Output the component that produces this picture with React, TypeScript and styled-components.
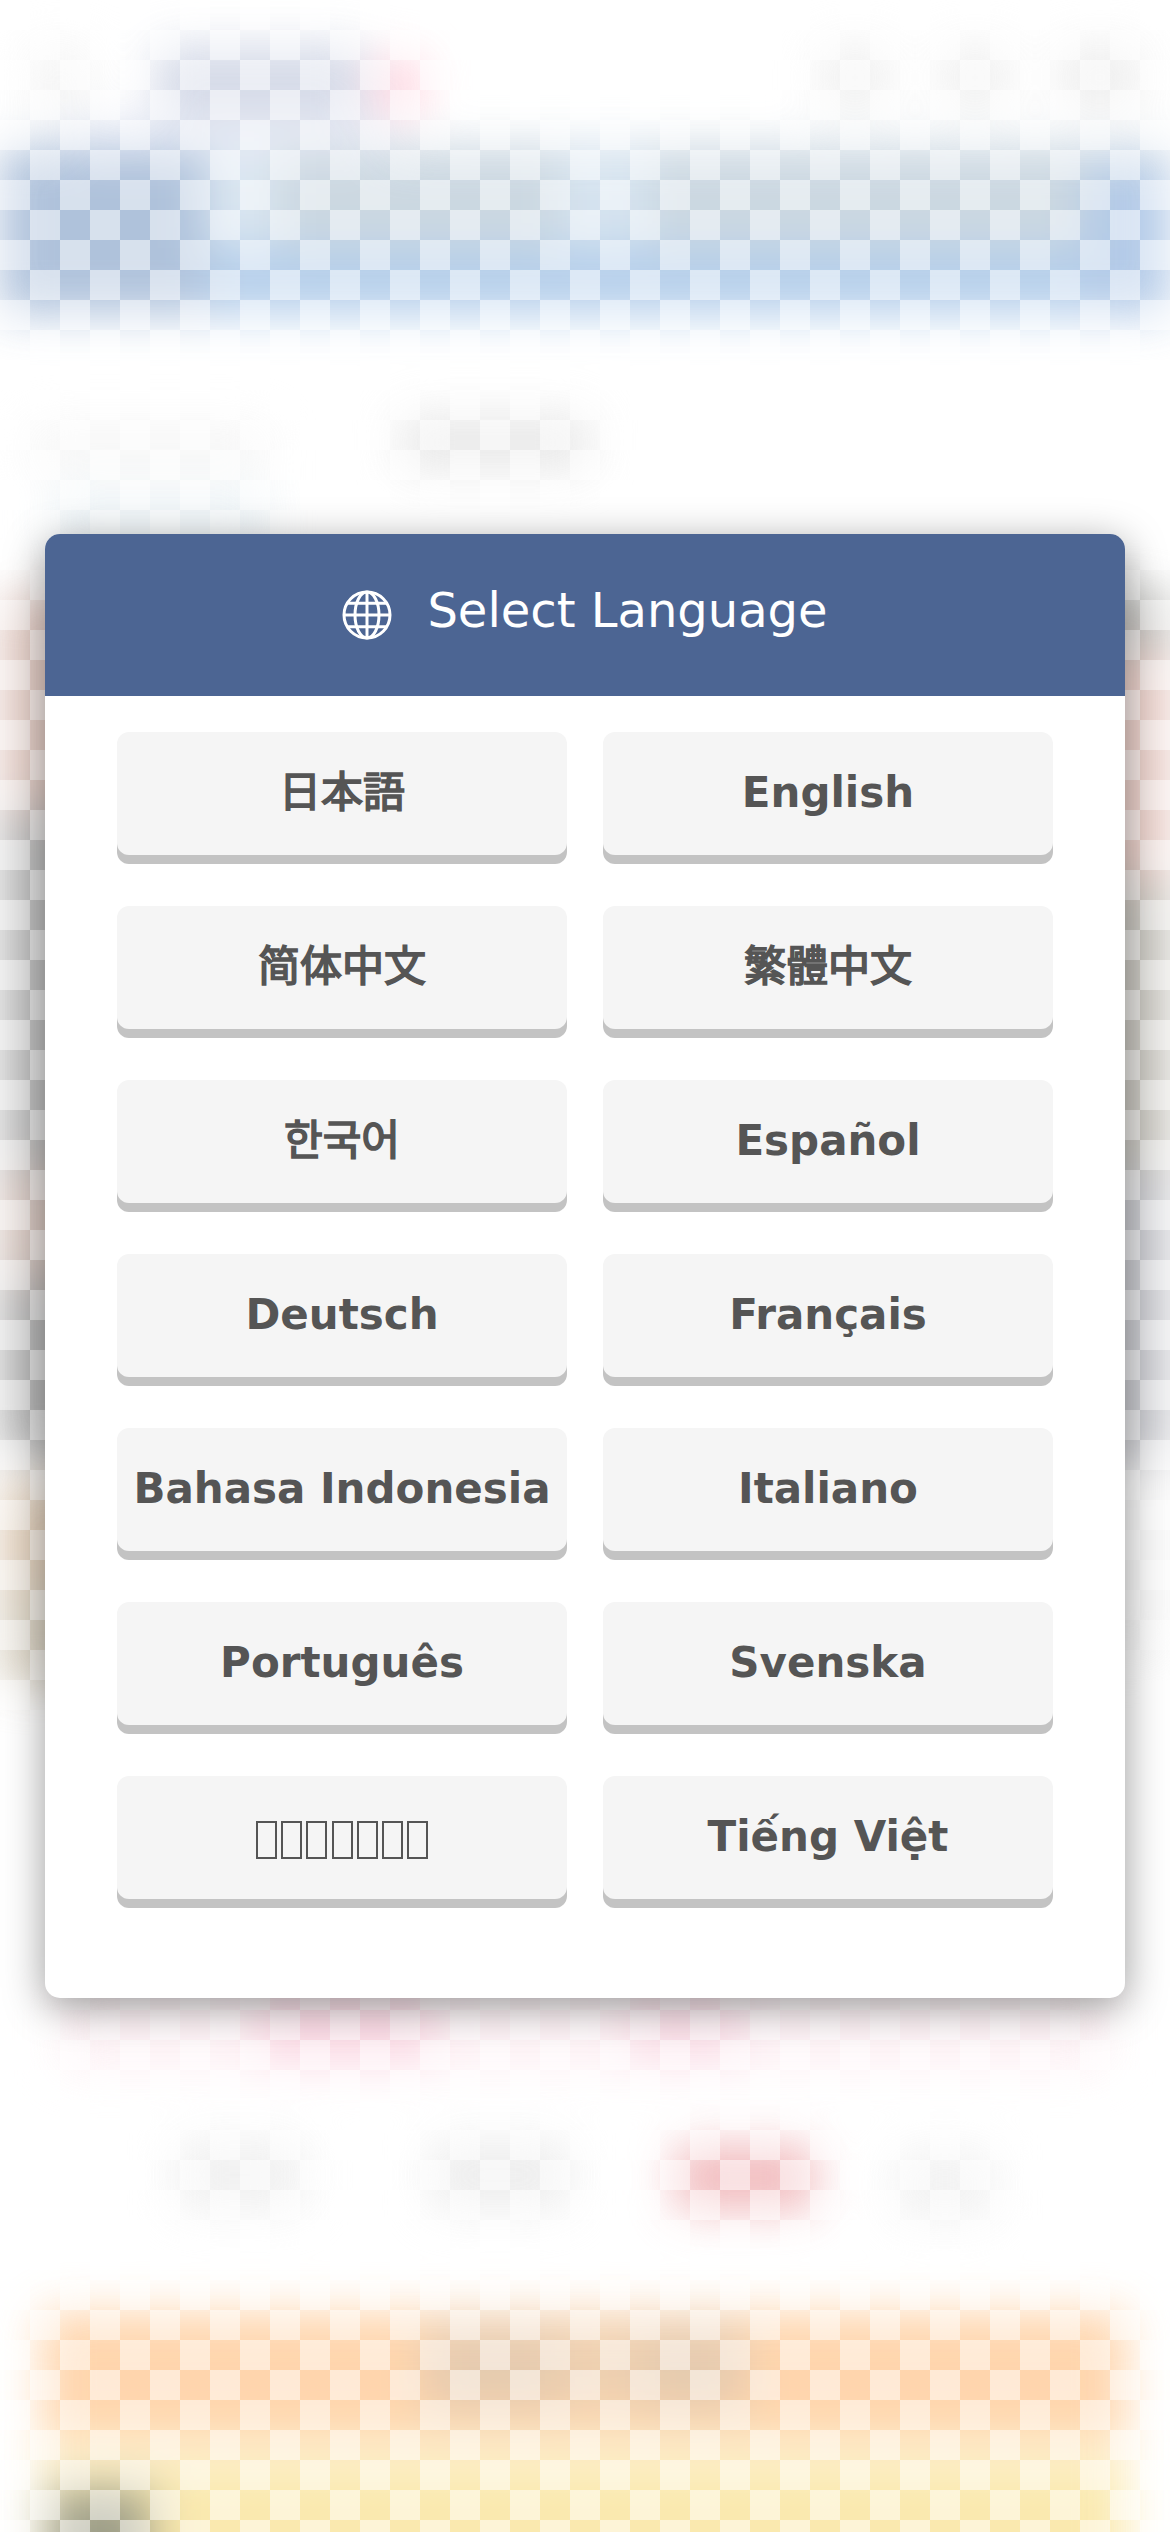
import React from "react";
import styled, { createGlobalStyle } from "styled-components";

const GlobalStyle = createGlobalStyle`
  * { box-sizing: border-box; }
  html, body { margin: 0; padding: 0; background: #fff; }
`;

const Page = styled.main`
  position: relative;
  isolation: isolate;
  width: 1170px;
  height: 2532px;
  padding: 534px 45px;
  overflow: hidden;
  background: #fff;
  font-family: "DejaVu Sans", "Noto Sans CJK JP", sans-serif;
`;

type Patch = [color: string, x: number, y: number, w: number, h: number];

const patches: Patch[] = [
  ["#ced4e4", 155, 45, 210, 72],
  ["#ffccd9", 375, 58, 48, 56],
  ["#f3f3f3", 30, 45, 60, 75],
  ["#eeeeee", 820, 45, 70, 65],
  ["#eeeeee", 940, 45, 70, 65],
  ["#ebebeb", 1060, 45, 80, 65],
  ["#e9ecf6", 60, 117, 330, 33],
  ["#a3b9d6", 0, 150, 205, 163],
  ["#a7c2e4", 1085, 165, 85, 148],
  ["#a9c7e8", 0, 248, 1170, 67],
  ["#d0e0ee", 560, 150, 90, 98],
  ["#d6e4f0", 205, 150, 70, 98],
  ["#c4d2dd", 0, 145, 1170, 103],
  ["#f4f4f4", 30, 425, 240, 45],
  ["#e4e4e4", 400, 415, 190, 55],
  ["#eaf2f6", 50, 490, 220, 60],
  ["#dec3ba", 0, 595, 90, 215],
  ["#b0b0b0", 0, 810, 90, 360],
  ["#cdbab2", 0, 1170, 90, 110],
  ["#a7a7a7", 0, 1280, 90, 178],
  ["#dbc6ae", 0, 1482, 90, 103],
  ["#d3cab8", 0, 1585, 90, 100],
  ["#b7b7b3", 1080, 590, 90, 60],
  ["#e6c6be", 1080, 650, 90, 230],
  ["#bebbb3", 1080, 880, 90, 290],
  ["#bebfc5", 1080, 1170, 90, 290],
  ["#f5f5f5", 1080, 1460, 90, 200],
  ["#fbd3e0", 260, 1990, 170, 72],
  ["#fad9e4", 630, 1990, 110, 72],
  ["#fdeff3", 60, 1990, 1050, 80],
  ["#eeeeee", 175, 2140, 130, 70],
  ["#ebebeb", 430, 2140, 140, 70],
  ["#efb0b3", 675, 2145, 140, 66],
  ["#f0f0f0", 895, 2150, 100, 70],
  ["#e2c3a3", 425, 2325, 135, 85],
  ["#ecc9a4", 560, 2325, 80, 85],
  ["#e2c3a3", 640, 2325, 105, 85],
  ["#ffcfa0", 42, 2312, 1084, 124],
  ["#8d8e76", 50, 2490, 100, 115],
  ["#fdf0cd", 42, 2436, 1084, 34],
  ["#fae6a2", 42, 2470, 1084, 180],
];

const patchLayers = patches
  .map(([c, x, y, w, h]) => `linear-gradient(${c}, ${c}) ${x}px ${y}px / ${w}px ${h}px no-repeat`)
  .join(", ");

const BlurredPage = styled.div`
  position: absolute;
  inset: 0 0 -120px;
  z-index: -2;
  background: ${patchLayers};
  filter: blur(23px);
  opacity: 0.86;
`;

const Checkerboard = styled.div`
  position: absolute;
  inset: 0;
  z-index: -1;
  background: repeating-conic-gradient(transparent 0 25%, rgba(255, 255, 255, 0.5) 0 50%) 0 0 / 60px 60px;
`;

const Dialog = styled.section`
  height: 1464px;
  border-radius: 15px;
  overflow: hidden;
  background: #fff;
  box-shadow: 0 9px 42px rgba(0, 0, 0, 0.4);
`;

const Header = styled.header`
  display: flex;
  align-items: center;
  justify-content: center;
  gap: 35px;
  height: 162px;
  padding-bottom: 10px;
  background: #4c6593;
  color: #fff;
`;

const Title = styled.h1`
  margin: 0;
  font-size: 48px;
  font-weight: 400;
  line-height: 56px;
`;

const Globe = styled.svg`
  width: 50px;
  height: 50px;
  margin-top: 9px;
  fill: none;
  stroke: #fff;
  stroke-width: 3;
`;

const Languages = styled.div`
  display: grid;
  grid-template-columns: 450px 450px;
  grid-auto-rows: 123px;
  gap: 51px 36px;
  padding: 36px 72px;
`;

const LanguageButton = styled.button<{ $eastAsian?: boolean }>`
  display: flex;
  align-items: center;
  justify-content: center;
  margin: 0;
  padding: 0 0 ${({ $eastAsian }) => ($eastAsian ? 11 : 3)}px;
  border: 0;
  border-radius: 12px;
  background: #f5f5f5;
  box-shadow: 0 9px 0 #c3c3c3;
  color: #555;
  font: inherit;
  font-size: 42px;
  font-weight: ${({ $eastAsian }) => ($eastAsian ? 400 : 700)};
  -webkit-text-stroke: ${({ $eastAsian }) => ($eastAsian ? "1.7px #555" : "0")};
  white-space: nowrap;
`;

const EmptyGlyphs = styled.span`
  display: flex;
  gap: 4.2px;
  padding-top: 7px;
`;

const EmptyGlyph = styled.span`
  width: 21px;
  height: 38px;
  border: 2px solid #555;
`;

const languages = [
  { code: "ja", label: "日本語", eastAsian: true },
  { code: "en", label: "English" },
  { code: "zh-Hans", label: "简体中文", eastAsian: true },
  { code: "zh-Hant", label: "繁體中文", eastAsian: true },
  { code: "ko", label: "한국어", eastAsian: true },
  { code: "es", label: "Español" },
  { code: "de", label: "Deutsch" },
  { code: "fr", label: "Français" },
  { code: "id", label: "Bahasa Indonesia" },
  { code: "it", label: "Italiano" },
  { code: "pt", label: "Português" },
  { code: "sv", label: "Svenska" },
  { code: "th", emptyGlyphs: 7 },
  { code: "vi", label: "Tiếng Việt" },
];

export default function App() {
  return (
    <>
      <GlobalStyle />
      <Page>
        <BlurredPage />
        <Checkerboard />
        <Dialog>
          <Header>
            <Globe viewBox="0 0 50 50">
              <circle cx="25" cy="25" r="23" />
              <ellipse cx="25" cy="25" rx="12" ry="23" />
              <path d="M25 2v46M2 25h46M5 13.2h40M5 36.8h40" />
            </Globe>
            <Title>Select Language</Title>
          </Header>
          <Languages>
            {languages.map(({ code, label, eastAsian, emptyGlyphs }) => (
              <LanguageButton key={code} type="button" $eastAsian={eastAsian}>
                {label}
                {emptyGlyphs && (
                  <EmptyGlyphs>
                    {Array.from({ length: emptyGlyphs }, (_, i) => (
                      <EmptyGlyph key={i} />
                    ))}
                  </EmptyGlyphs>
                )}
              </LanguageButton>
            ))}
          </Languages>
        </Dialog>
      </Page>
    </>
  );
}
